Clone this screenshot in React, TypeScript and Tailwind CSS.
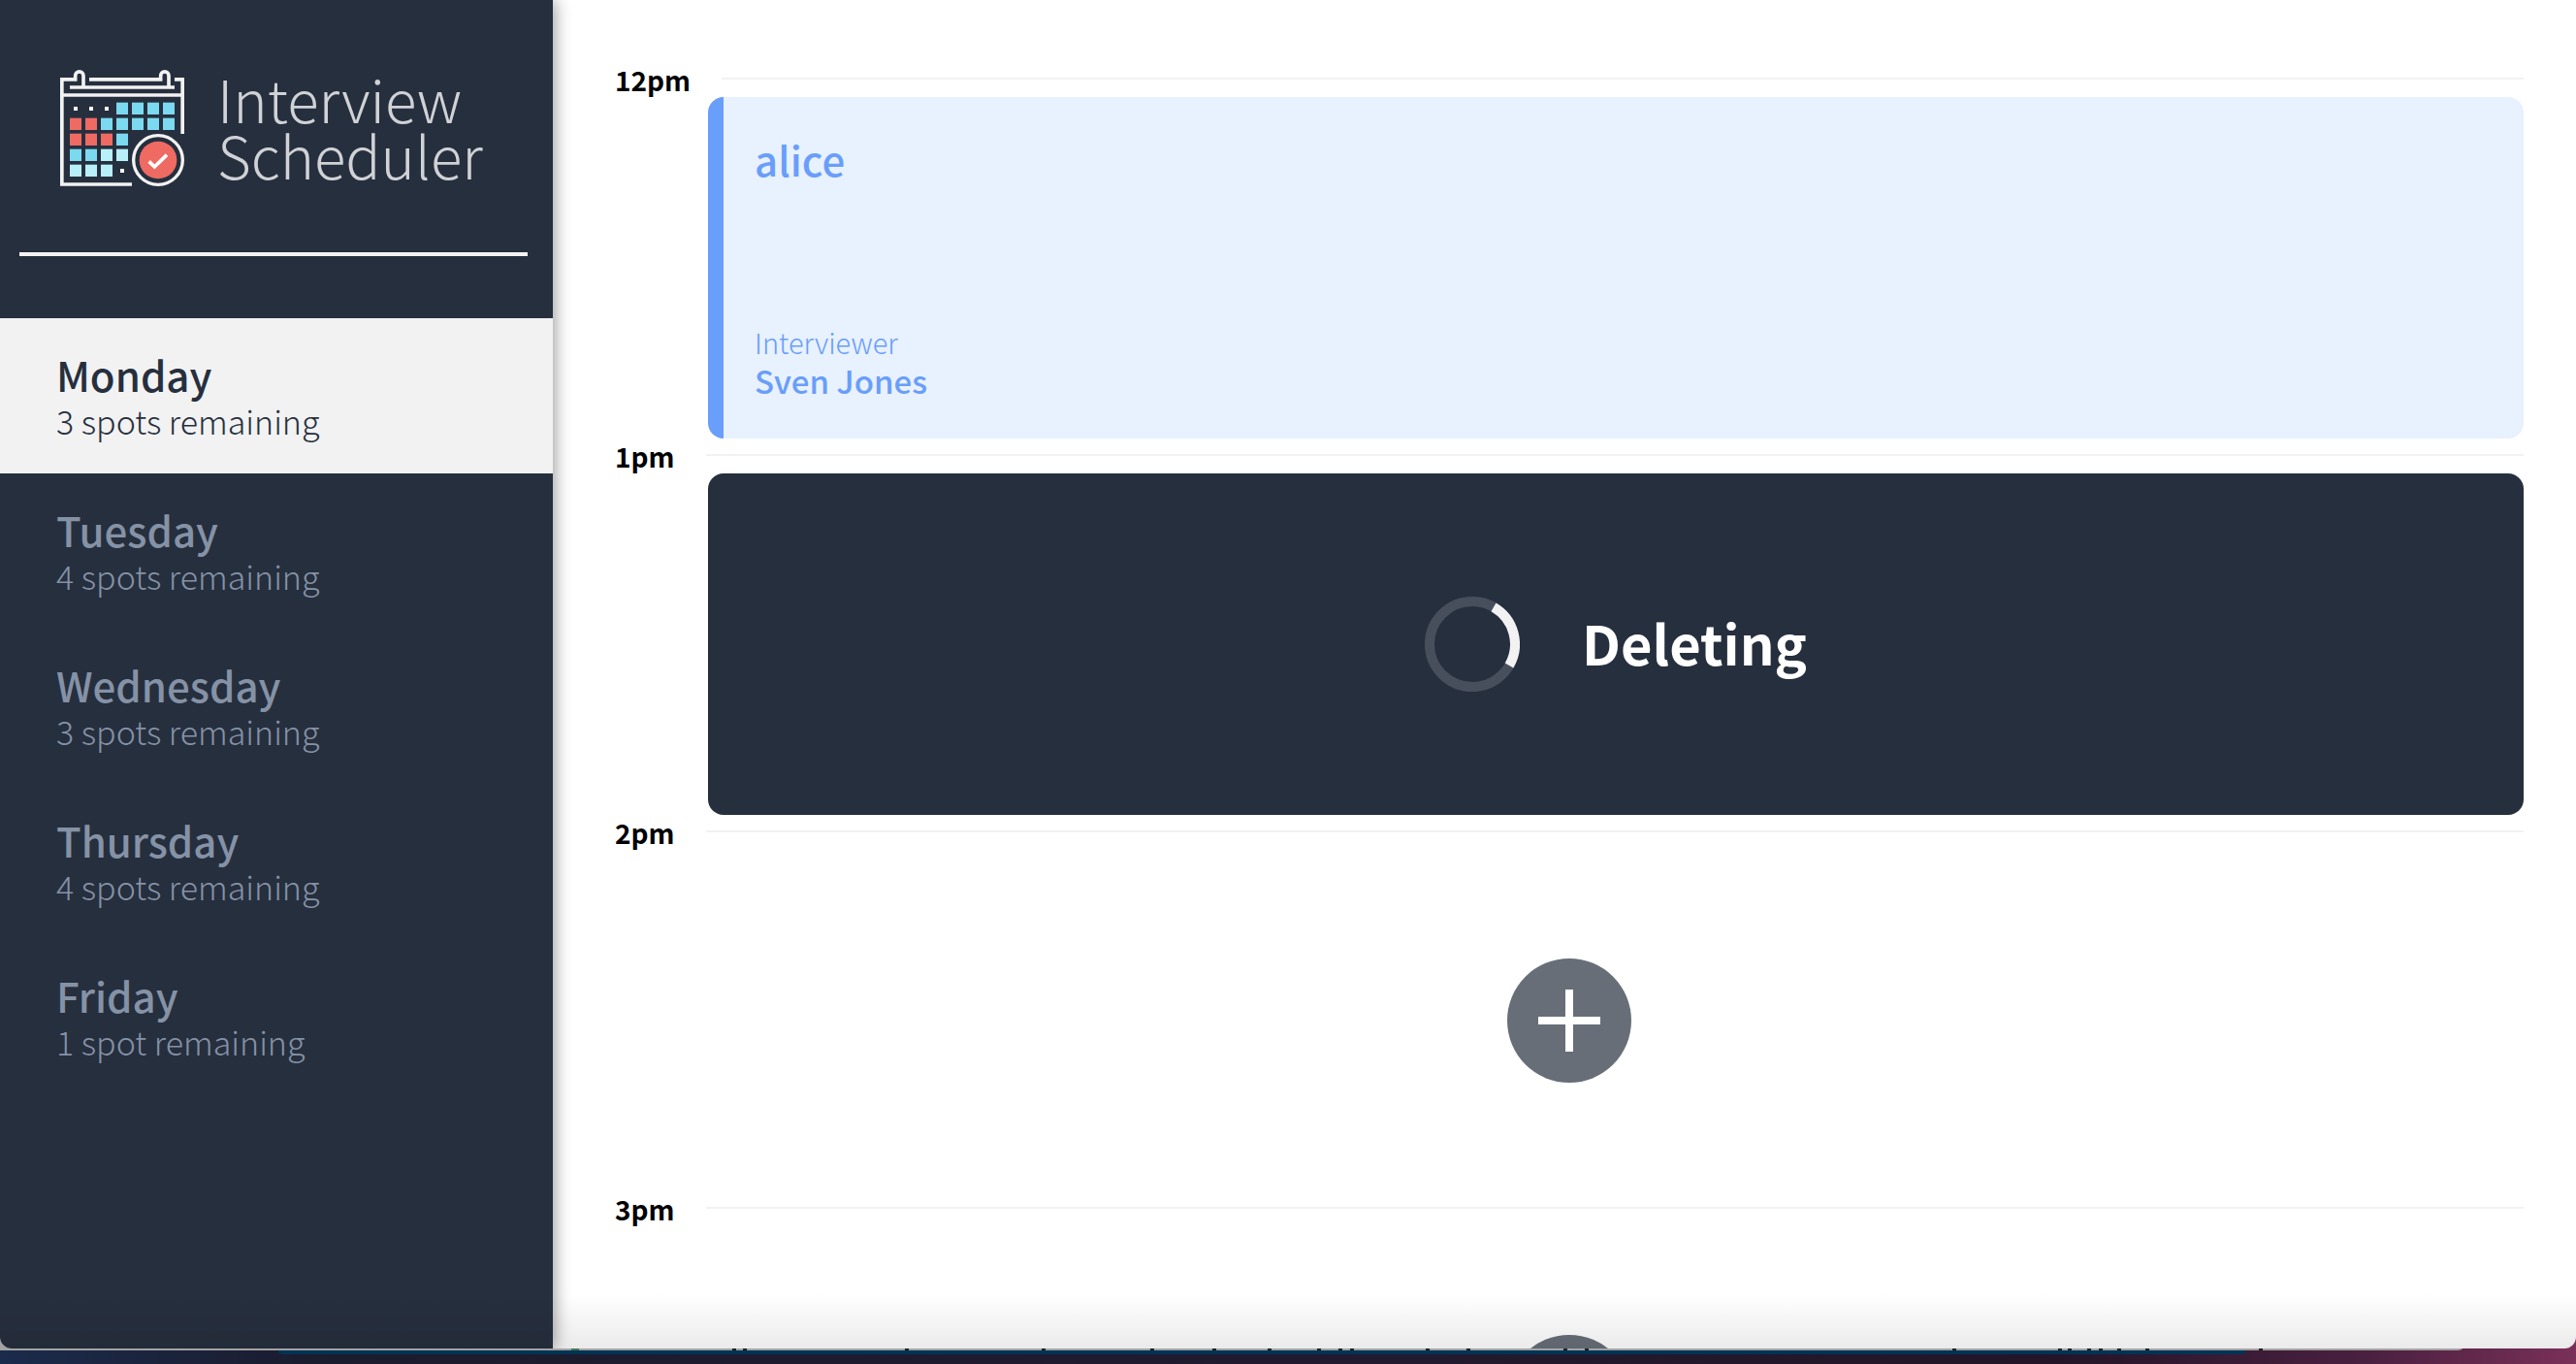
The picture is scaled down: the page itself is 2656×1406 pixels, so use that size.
import React from "react";

type Day = { name: string; spots: string };

const days: Day[] = [
  { name: "Monday", spots: "3 spots remaining" },
  { name: "Tuesday", spots: "4 spots remaining" },
  { name: "Wednesday", spots: "3 spots remaining" },
  { name: "Thursday", spots: "4 spots remaining" },
  { name: "Friday", spots: "1 spot remaining" },
];

const BLUE = "#7bd9f0";
const RED = "#ee6a62";
const PALE = "#b8f0fa";

const cells: { y: number; row: (string | null)[] }[] = [
  { y: 137, row: [null, null, null, BLUE, BLUE, BLUE, BLUE] },
  { y: 185, row: [RED, RED, BLUE, BLUE, BLUE, BLUE, BLUE] },
  { y: 233, row: [RED, RED, RED, BLUE] },
  { y: 281, row: [BLUE, BLUE, PALE, PALE] },
  { y: 329, row: [PALE, PALE, PALE, null] },
];

function CalendarLogo() {
  return (
    <svg viewBox="66 36 384 360" className="h-[120px] w-32 shrink-0" fill="none" aria-hidden="true">
      <g stroke="#f2f2f2" strokeWidth="11">
        <path d="M288 390H71.5V65.5H113V54a12.5 12.5 0 0 1 25 0V90" />
        <path d="M156 65.5H377V54a12.5 12.5 0 0 1 25 0V90" />
        <path d="M420 65.5H444.5V234" />
        <path d="M96 90H420" />
        <path d="M72 114H444" />
        <circle cx="369" cy="315" r="76" strokeWidth="10" />
      </g>
      {cells.map(({ y, row }) =>
        row.map((fill, i) =>
          fill ? (
            <rect key={`${y}-${i}`} x={96 + i * 48} y={y} width="36" height="37" fill={fill} />
          ) : (
            <rect key={`${y}-${i}`} x={108 + i * 48} y={y + 13} width="12" height="12" fill="#fff" />
          ),
        ),
      )}
      <circle cx="369" cy="315" r="58" fill={RED} />
      <path d="M341 319L358 336L396 299" stroke="#fff" strokeWidth="11" />
    </svg>
  );
}

function Sidebar() {
  return (
    <aside className="z-10 flex w-[570px] shrink-0 flex-col bg-[#262f3e] shadow-[2px_0_16px_rgba(0,0,0,0.4)]">
      <div className="flex h-[260px] items-start gap-[34px] pl-[62px] pt-[72px]">
        <CalendarLogo />
        <h1 className="text-[60px] font-light leading-[58px] text-[#d0d2d6]">
          Interview
          <br />
          Scheduler
        </h1>
      </div>
      <hr className="ml-5 mr-[26px] h-1 border-0 bg-[#f5f3f2]" />
      <nav className="mt-16">
        <ul>
          {days.map((day, i) => (
            <li key={day.name}>
              <button
                type="button"
                className={
                  i === 0
                    ? "flex h-40 w-full flex-col justify-center bg-[#f2f2f2] pl-[58px] pt-1 text-left text-[#262f3e]"
                    : "flex h-40 w-full flex-col justify-center pl-[58px] pt-1 text-left text-[#8592a6]"
                }
              >
                <span className="text-[42px] font-medium leading-[48px]">{day.name}</span>
                <span className="text-[34px] font-light leading-[48px]">{day.spots}</span>
              </button>
            </li>
          ))}
        </ul>
      </nav>
    </aside>
  );
}

function Slot({ time, children }: { time: string; children?: React.ReactNode }) {
  return (
    <article>
      <header className="mb-0.5 flex h-[34px] items-center">
        <h4 className="mr-8 pt-0.5 text-[28px] font-bold leading-[34px] text-black">{time}</h4>
        <hr className="h-0.5 flex-1 border-0 bg-[#f2f2f2]" />
      </header>
      <div className="flex h-[352px] items-center justify-center">{children}</div>
    </article>
  );
}

function Booking({ student, interviewer }: { student: string; interviewer: string }) {
  return (
    <section className="ml-24 flex h-full flex-1 flex-col justify-between rounded-2xl border-l-[16px] border-[#699efa] bg-[#e8f1fe] py-10 pl-8 text-[#699efa]">
      <h2 className="text-[42px] font-medium leading-[48px]">{student}</h2>
      <div>
        <h4 className="text-[29px] font-light leading-[40px]">Interviewer</h4>
        <h3 className="text-[33px] font-medium leading-[40px]">{interviewer}</h3>
      </div>
    </section>
  );
}

function Status({ message }: { message: string }) {
  return (
    <section className="ml-24 flex h-full flex-1 items-center justify-center gap-16 rounded-2xl bg-[#262f3e]">
      <svg viewBox="0 0 98 98" className="size-[98px]" fill="none" strokeWidth="10" aria-hidden="true">
        <circle cx="49" cy="49" r="44" stroke="#484f5c" />
        <path d="M71 10.9A44 44 0 0 1 87.1 71" stroke="#f2f2f2" />
      </svg>
      <h1 className="pb-1 text-[56px] font-bold leading-[84px] text-white">{message}</h1>
    </section>
  );
}

function AddButton() {
  return (
    <button type="button" aria-label="Add" className="size-32 rounded-full">
      <svg viewBox="0 0 128 128" className="size-32" aria-hidden="true">
        <circle cx="64" cy="64" r="64" fill="#686e78" />
        <path d="M64 32V96M32 64H96" stroke="#fff" strokeWidth="8" />
      </svg>
    </button>
  );
}

const marks = [
  590, 756, 767, 934, 1075, 1187, 1251, 1308, 1359, 1381, 1393, 1471, 1513, 1613, 1635, 2014, 2123, 2133, 2153,
  2165, 2184, 2213, 2330,
];

export default function App() {
  return (
    <div className="flex h-screen flex-col overflow-hidden bg-[linear-gradient(to_right,#1b2b4c,#1b1c2e_12%,#221a2e_55%,#241528_80%,#4a2040_92%,#7a3058)] font-['Noto_Sans_CJK_SC',sans-serif]">
      <div className="relative z-10 flex min-h-0 flex-1 overflow-hidden rounded-b-xl bg-white">
        <Sidebar />
        <main className="min-w-0 flex-1 pl-16 pr-[54px] pt-16">
          <Slot time="12pm">
            <Booking student="alice" interviewer="Sven Jones" />
          </Slot>
          <Slot time="1pm">
            <Status message="Deleting" />
          </Slot>
          <Slot time="2pm">
            <AddButton />
          </Slot>
          <Slot time="3pm">
            <AddButton />
          </Slot>
        </main>
        <div className="pointer-events-none absolute inset-x-0 bottom-0 z-20 h-14 bg-linear-to-t from-black/8 to-transparent" />
      </div>
      <div className="-mt-4 mr-[114px] flex h-[18px] shrink-0 items-end overflow-hidden rounded-br-lg bg-[#a2a3a2]">
        <svg width="2400" height="2" className="block shrink-0" aria-hidden="true">
          {marks.map((x) => (
            <rect key={x} x={x - 1} y="0" width={x === 590 ? 8 : 4} height="2" fill={x === 590 ? "#3c7d52" : "#1c221f"} />
          ))}
        </svg>
      </div>
      <div className="ml-[287px] mr-[340px] h-1 shrink-0 rounded-b-lg bg-[#003355]" />
      <div className="h-2.5 shrink-0" />
    </div>
  );
}
